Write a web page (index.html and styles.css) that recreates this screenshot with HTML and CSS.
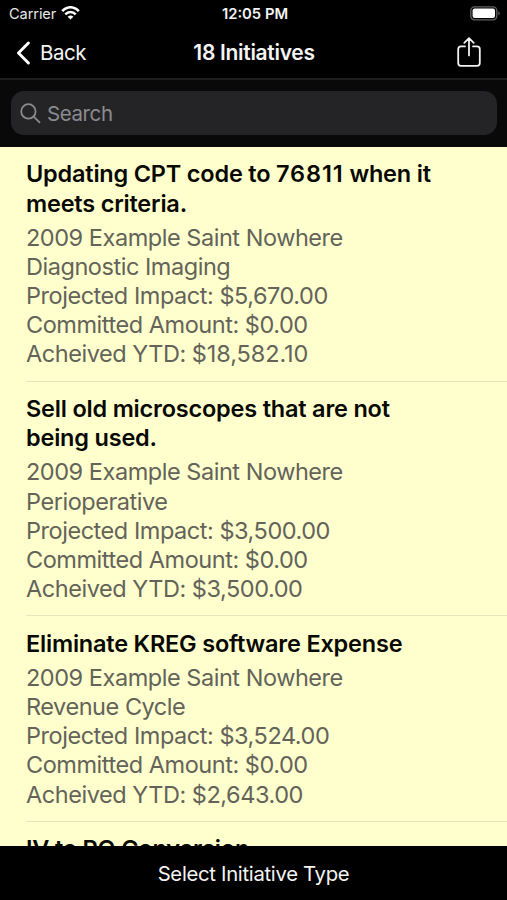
FILE: index.html
```html
<!DOCTYPE html>
<html lang="en">
<head>
<meta charset="utf-8">
<title>18 Initiatives</title>
<link rel="stylesheet" href="styles.css">
</head>
<body>
<div class="screen">
  <header class="top">
    <div class="status">
      <div class="carrier"><span>Carrier</span>
        <svg class="wifi" width="19" height="14" viewBox="0 0 19 14" fill="none" stroke="#fff" stroke-width="2.5"><path d="M1.2 5.2C6-.1 13-.1 17.8 5.2M4.3 8.4C7.2 5.3 11.8 5.3 14.7 8.4"/><path d="M6.6 10.7Q9.5 8.3 12.4 10.7L9.5 13.6Z" fill="#fff" stroke="none"/></svg>
      </div>
      <time class="clock">12:05 PM</time>
      <svg class="battery" width="31" height="15" viewBox="0 0 31 15"><rect x=".8" y=".8" width="26" height="13" rx="3.7" fill="none" stroke="#636363" stroke-width="1.3"/><rect x="2.6" y="2.6" width="22.4" height="9.4" rx="2" fill="#fff"/><path d="M28.5 5Q30.8 7.3 28.5 9.6Z" fill="#777"/></svg>
    </div>
    <nav class="nav">
      <a class="back"><svg width="15" height="24" viewBox="0 0 15 24" fill="none" stroke="#fff" stroke-width="2.9" stroke-linecap="round" stroke-linejoin="round"><path d="M12.4 2 2.5 12l9.9 10"/></svg><span>Back</span></a>
      <h1 class="heading">18 Initiatives</h1>
      <svg class="share" width="26" height="32" viewBox="0 0 26 32" fill="none" stroke="#f2f2f2" stroke-width="1.8" stroke-linecap="round" stroke-linejoin="round"><path d="M9 10.4H5Q2.2 10.4 2.2 13.2V27Q2.2 29.8 5 29.8H21Q23.8 29.8 23.8 27V13.2Q23.8 10.4 21 10.4H17M13 19.4V2.4M8.3 6.8 13 2.2 17.7 6.8"/></svg>
    </nav>
  </header>
  <div class="search-bar">
    <div class="search"><svg width="21" height="21" viewBox="0 0 21 21" fill="none" stroke="#8b8b8f" stroke-width="1.8" stroke-linecap="round"><circle cx="8.4" cy="8.4" r="7.2"/><path d="m13.7 13.7 5.8 5.6"/></svg><span>Search</span></div>
  </div>
  <main class="list">
    <article class="item">
      <h2 class="title">Updating CPT code to <span class="code">76811</span> when it<br>meets criteria.</h2>
      <p class="detail">2009 Example Saint Nowhere<br>Diagnostic Imaging<br>Projected Impact: $5,670.00<br>Committed Amount: $0.00<br>Acheived YTD: <span class="amount">$18,582.10</span></p>
    </article>
    <article class="item">
      <h2 class="title">Sell old microscopes that are not<br>being used.</h2>
      <p class="detail">2009 Example Saint Nowhere<br>Perioperative<br>Projected Impact: $3,500.00<br>Committed Amount: $0.00<br>Acheived YTD: $3,500.00</p>
    </article>
    <article class="item">
      <h2 class="title">Eliminate KREG software Expense</h2>
      <p class="detail">2009 Example Saint Nowhere<br>Revenue Cycle<br>Projected Impact: $3,524.00<br>Committed Amount: $0.00<br>Acheived YTD: $2,643.00</p>
    </article>
    <article class="item">
      <h2 class="title">IV to PO Conversion</h2>
    </article>
  </main>
  <footer class="toolbar">Select Initiative Type</footer>
</div>
</body>
</html>
```
FILE: styles.css
```css
* { box-sizing: border-box; }
body { margin: 0; background: #000; font-family: Inter, "Liberation Sans", sans-serif; }
h1, h2, p { margin: 0; }
svg { display: block; flex: none; }
.screen { width: 507px; height: 900px; display: flex; flex-direction: column; overflow: hidden; background: #000; color: #f4f4f4; }
.top { height: 80px; flex: none; border-bottom: 2px solid #1e1e1f; }
.status { height: 27px; display: grid; grid-template-columns: 1fr auto 1fr; align-items: center; padding: 0 6px 0 9px; }
.carrier { display: flex; align-items: center; gap: 5px; font-size: 14.6px; letter-spacing: -0.1px; color: #e8e8e8; }
.wifi { margin-top: -2px; }
.clock { font-size: 14.8px; font-weight: 600; letter-spacing: 0; }
.battery { justify-self: end; margin-top: -1px; }
.nav { height: 51px; display: grid; grid-template-columns: 1fr auto 1fr; align-items: center; padding: 0 15px 0 16px; }
.back { display: flex; align-items: center; gap: 9px; font-size: 20.5px; letter-spacing: -0.5px; }
.heading { font-size: 21px; font-weight: 600; letter-spacing: -0.3px; margin-top: -1px; }
.share { justify-self: end; margin: -2px 10px 0 0; }
.search-bar { height: 67px; flex: none; padding: 11px 10px 12px 11px; background: #090909; }
.search { height: 44px; display: flex; align-items: center; gap: 6px; padding-left: 9px; border-radius: 13px; background: #242426; color: #8b8b8f; font-size: 20.5px; letter-spacing: -0.4px; }
.list { flex: 1; min-height: 0; overflow: hidden; padding-left: 26px; background: #ffffce; }
.item { padding: 12.4px 0 12.1px; border-bottom: 1px solid #e5e5bd; }
.title { font-size: 23.5px; line-height: 29.2px; font-weight: 600; letter-spacing: -0.2px; color: #080804; white-space: nowrap; }
.detail { margin-top: 4.8px; font-size: 23.5px; line-height: 29.2px; letter-spacing: -0.46px; color: #63635a; white-space: nowrap; }
.code { letter-spacing: 0.9px; }
.amount { letter-spacing: -0.1px; }
.toolbar { height: 54px; flex: none; display: flex; align-items: center; justify-content: center; font-size: 20.3px; letter-spacing: -0.3px; }
```
